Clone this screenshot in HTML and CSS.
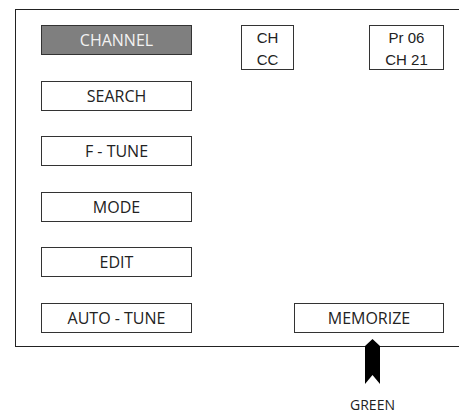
FILE: index.html
```html
<!DOCTYPE HTML>
<html lang="en-US">
<head>
	<meta charset="UTF-8">
	<title>Channel menu</title>
	<link rel="stylesheet" href="styles.css">
</head>
<body>
	<div id="pantalla">
		<div id="marco">
			<ul id="menu">
				<li class="actual">CHANNEL</li>
				<li>SEARCH</li>
				<li>F - TUNE</li>
				<li>MODE</li>
				<li>EDIT</li>
				<li>AUTO - TUNE</li>
			</ul>
			<div id="derecha">
				<div id="info">
					<div class="caja caja-ch">CH<br>CC</div>
					<div class="caja caja-pr">Pr 06<br>CH 21</div>
				</div>
				<div id="memorizar">MEMORIZE</div>
			</div>
		</div>
		<!-- flecha del boton verde, encima del borde del marco -->
		<div id="tecla">
			<svg width="15" height="45" viewBox="0 0 15 45">
				<polygon points="7.5,0 15,7 15,45 7.5,36 0,45 0,7" fill="#000"/>
			</svg>
			<span>GREEN</span>
		</div>
	</div>
</body>
</html>
```

FILE: styles.css
```css
/* pagina */
html, body {
margin: 0;
padding: 0;
overflow: hidden;
background: #fff;
}

#pantalla {
position: relative;
width: 459px;
height: 413px;
padding: 9px 0 0 15px;
box-sizing: border-box;
overflow: hidden;
}

/* marco principal, se sale por la derecha */
#marco {
display: flex;
padding: 15px 0 13px 25px;
width: 480px;
box-sizing: border-box;
border: 1px solid #222;
}

/* botones de la izquierda */
#menu {
display: flex;
flex-direction: column;
gap: 25.5px;
margin: 0;
padding: 0;
width: 151px;
flex-shrink: 0;
}
#menu>li {
list-style: none;
height: 30px;
box-sizing: border-box;
border: 1px solid #333;
display: flex;
align-items: center;
justify-content: center;
font-family: "Open Sans", sans-serif;
font-size: 16px;
color: #222;
background: #fff;
}
#menu>.actual {
background: #7f7f7f;
color: #f2f2f2;
}

/* zona derecha */
#derecha {
display: flex;
flex-direction: column;
justify-content: space-between;
width: 252px;
flex-shrink: 0;
}
#info {
display: flex;
justify-content: space-between;
padding-left: 49px;
}
.caja {
height: 45px;
box-sizing: border-box;
border: 1px solid #333;
padding-top: 1px;
font-family: "Liberation Sans", Arial, sans-serif;
font-size: 15px;
line-height: 22px;
text-align: center;
color: #222;
}
.caja-ch {
width: 53px;
}
.caja-pr {
width: 75px;
}
#memorizar {
align-self: flex-end;
width: 150px;
height: 30px;
box-sizing: border-box;
border: 1px solid #333;
display: flex;
align-items: center;
justify-content: center;
font-family: "Open Sans", sans-serif;
font-size: 16px;
color: #222;
}

/* tecla verde */
#tecla {
position: absolute;
left: 342px;
top: 339px;
width: 61px;
display: flex;
flex-direction: column;
align-items: center;
}
#tecla>svg {
display: block;
}
#tecla>span {
margin-top: 12px;
font-family: "Open Sans", sans-serif;
font-size: 14px;
line-height: 18px;
color: #222;
}
```
